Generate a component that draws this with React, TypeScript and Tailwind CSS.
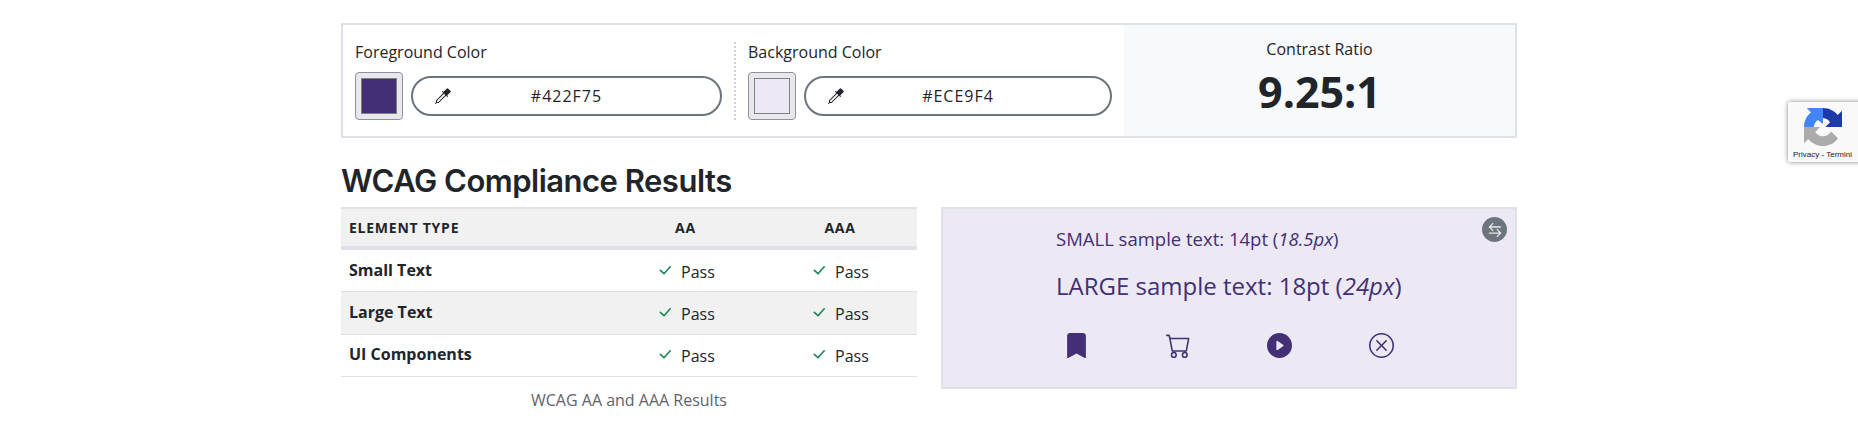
import { BsEyedropper, BsBookmarkFill, BsCart, BsPlayCircleFill, BsXCircle, BsArrowLeftRight } from 'react-icons/bs';

function ColorField({ label, value, swatch }: { label: string; value: string; swatch: string }) {
  return (
    <div className="flex-1">
      <div className="h-6 leading-6">{label}</div>
      <div className="mt-2 flex items-center gap-2">
        <div className="size-12 shrink-0 rounded-[4px] border border-[#8f8f9d] bg-[#e9e9ed] p-[5px]">
          <div className={`size-9 border border-[#808080] ${swatch}`} />
        </div>
        <div className="flex h-10 flex-1 items-center rounded-full border-2 border-[#6c757d] px-[22px]">
          <BsEyedropper className="size-4 shrink-0" />
          <span className="flex-1 text-center tracking-[1px]">{value}</span>
          <span className="w-4" />
        </div>
      </div>
    </div>
  );
}

function Pass() {
  return (
    <div className="flex w-[154px] items-start pt-[2px] pl-[50px] leading-6">
      <svg className="mt-[5px] h-[10px] w-3" viewBox="0 0 12 10" fill="none" stroke="#198754" strokeWidth="1.6" strokeLinecap="round" strokeLinejoin="round">
        <path d="M1.4 5.4 5 8.7 11.2 1.8" />
      </svg>
      <span className="ml-[10px]">Pass</span>
    </div>
  );
}

const rows = [
  { name: 'Small Text', style: 'h-[42px] pt-2' },
  { name: 'Large Text', style: 'h-[43px] bg-[#f1f1f1] pt-2' },
  { name: 'UI Components', style: 'h-[42px] pt-[7px]' },
];

export default function App() {
  return (
    <div className="relative h-[423px] overflow-hidden bg-white pt-[23px] pl-[341px] font-['Open_Sans','Noto_Sans',sans-serif] text-base text-[#212529]">
      <div className="flex h-[115px] w-[1176px] border-2 border-[#dee2e6]">
        <div className="flex w-[391px] pt-[15px] pr-3 pl-3">
          <ColorField label="Foreground Color" value="#422F75" swatch="bg-[#422f75]" />
        </div>
        <div className="mt-[17px] h-[78px] w-0 border-l-2 border-dotted border-[#ced4da]" />
        <div className="flex w-[388px] pt-[15px] pr-3 pl-3">
          <ColorField label="Background Color" value="#ECE9F4" swatch="bg-[#ece9f4]" />
        </div>
        <div className="flex-1 bg-[#f8f9fa] pt-3 text-center">
          <div className="leading-6">Contrast Ratio</div>
          <div className="mt-[5px] text-[43px] leading-[52px] font-bold">9.25:1</div>
        </div>
      </div>

      <h2 className="mt-6 h-[45px] font-['Inter',sans-serif] text-[31px] leading-[38px] font-semibold tracking-[-0.5px]">WCAG Compliance Results</h2>

      <div className="flex items-start gap-6">
        <div className="w-[576px]">
          <div className="flex h-[43px] items-center border-t-2 border-b-4 border-[#dee2e6] bg-[#f1f1f1] pl-2 text-[14px] font-bold tracking-[0.75px]">
            <div className="flex-1">ELEMENT TYPE</div>
            <div className="w-[154px] pl-px text-center">AA</div>
            <div className="w-[155px] pl-px text-center">AAA</div>
          </div>
          {rows.map((row) => (
            <div key={row.name} className={`flex items-start border-b border-[#dee2e6] pl-2 ${row.style}`}>
              <div className="flex-1 leading-6 font-bold">{row.name}</div>
              <Pass />
              <Pass />
            </div>
          ))}
          <div className="pt-[11px] text-center leading-6 text-[#5f6368]">WCAG AA and AAA Results</div>
        </div>

        <div className="flex h-[182px] w-[576px] border-2 border-[#dee2e6] bg-[#ece9f4] pl-[113px] text-[#422f75]">
          <div className="pt-4 whitespace-nowrap">
            <p className="text-[18.5px] leading-7">SMALL sample text: 14pt (<em>18.5px</em>)</p>
            <p className="mt-[15px] text-2xl leading-9">LARGE sample text: 18pt (<em>24px</em>)</p>
            <div className="mt-[29px] flex gap-[76.6px] pl-2">
              <BsBookmarkFill className="size-[25px] shrink-0" />
              <BsCart className="size-[25px] shrink-0" />
              <BsPlayCircleFill className="size-[25px] shrink-0" />
              <BsXCircle className="size-[25px] shrink-0" />
            </div>
          </div>
          <button className="mt-2 mr-2 ml-auto flex size-[25px] items-center justify-center rounded-full bg-[#6c757d] text-white">
            <BsArrowLeftRight className="size-[14px] stroke-[0.3]" />
          </button>
        </div>
      </div>

      <div className="absolute top-[102px] left-[1788px] flex h-[60px] w-[256px] flex-col rounded-[2px] bg-[#f9f9f9] shadow-[0_0_5px_gray]">
        <svg className="mt-[6px] ml-4 h-[38px] w-[38px]" viewBox="0 0 64 64">
          <path fill="#1c3aa9" d="M64 32V4.700l-7.200 7.100C51 4.700 42 .1 32 .1V17c5 .4 9.300 3.100 11.800 7.100L36 32z" />
          <path fill="#4285f4" d="M32 .1H4.600l7.200 7.200C4.600 13.100 0 22 0 32h16.400c.4-5 3.100-9.300 7.100-11.800L32 27z" />
          <path fill="#ababab" d="M0 32v27.300l7.200-7.100C13 59.400 22 64 32 64c10.400 0 19.600-5 25.400-12.700L45.700 39.400a15.600 15.600 0 0 1-4.800 5.300c-2 1.600-4.900 2.900-8.900 2.900-5.500 0-10.300-3-13-7.300L27 32z" />
        </svg>
        <div className="mt-[4px] ml-[5px] font-['Liberation_Sans',sans-serif] text-[8px] leading-[10px] whitespace-nowrap text-[#222]">Privacy - Termini</div>
      </div>
    </div>
  );
}
